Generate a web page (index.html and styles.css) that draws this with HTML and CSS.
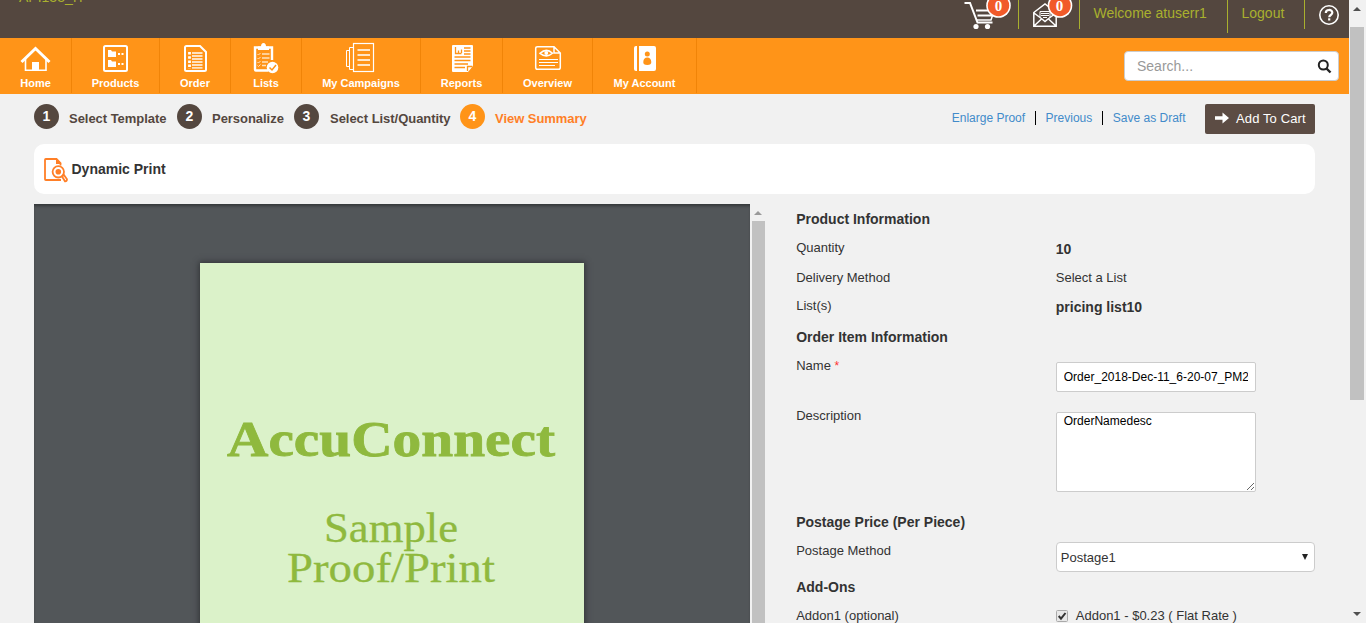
FILE: index.html
```html
<!DOCTYPE html>
<html lang="en">
<head>
<meta charset="utf-8">
<title>Dynamic Print - View Summary</title>
<link rel="stylesheet" href="styles.css">
</head>
<body>
<div class="app">
<div class="page">
  <header class="topbar">
    <div class="brand">API133_IT</div>
    <div class="top-actions">
      <a class="cart"><svg width="54" height="32" viewBox="964 0 54 32"><g fill="none" stroke="#fff" stroke-width="2"><path d="M964.500 3H970L977.500 22.500H992.500M976 10.500H990M977.500 15.500H993" /><path d="M993 14L991 20H977" stroke-width="1.500"/></g><circle cx="976" cy="26.500" r="2.600" fill="#fff"/><circle cx="987.500" cy="26.500" r="2.600" fill="#fff"/><circle cx="998.500" cy="5.500" r="12.300" fill="#fff"/><circle cx="998.500" cy="5.500" r="10.700" fill="#f15a29"/><text class="badge" x="998.500" y="10.500">0</text></svg></a>
      <a class="mail"><svg width="46" height="32" viewBox="1033 0 46 32"><g fill="none" stroke="#fff" stroke-width="1.500"><path d="M1033.800 12.500L1045 4L1056.200 12.500V26.300H1033.800ZM1034 13L1042 19L1045 21.500L1048 19L1056 13M1034 26L1042 18.500M1056 26L1048 18.500"/><path d="M1040 17V11.500H1050V17M1041 13.500H1049M1041 15.500H1049M1043 17.500H1047" stroke-width="1"/></g><circle cx="1060" cy="5.500" r="12.300" fill="#fff"/><circle cx="1060" cy="5.500" r="10.700" fill="#f15a29"/><text class="badge" x="1059.500" y="10.500">0</text></svg></a>
      <span class="welcome">Welcome atuserr1</span>
      <a class="logout">Logout</a>
      <a class="help"><svg width="22" height="22" viewBox="0 0 22 22"><circle cx="11" cy="11" r="9.200" fill="none" stroke="#fff" stroke-width="1.600"/><path d="M7.800 9C7.800 5 14.300 5 14.300 8.800C14.300 11 11.200 11 11.200 13.200" fill="none" stroke="#fff" stroke-width="2.200"/><path d="M10.100 14.300h2.200v2.200h-2.200z" fill="#fff"/></svg></a>
    </div>
  </header>

  <nav class="nav">
    <a class="nav-home"><svg width="31" height="32" viewBox="20 42 31 32"><path d="M21.500 62L35.500 48.500L49.500 62" fill="none" stroke="#fff" stroke-width="3"/><path d="M25.500 59V70.300H46V59" fill="none" stroke="#fff" stroke-width="1.600"/><path d="M32 62h7v9h-7z" fill="#fff"/></svg>Home</a>
    <a class="nav-products"><svg width="31" height="32" viewBox="100 42 31 32"><rect x="104" y="46" width="23" height="25" rx="1.500" fill="none" stroke="#fff" stroke-width="2"/><g fill="#fff"><path d="M108 50h3l1 1.500h4v5.500h-8zM108 60h3l1 1.500h4v5.500h-8zM118 53h2v2h-2zM121.500 53h2v2h-2zM118 63h2v2h-2zM121.500 63h2v2h-2z"/></g></svg>Products</a>
    <a class="nav-order"><svg width="32" height="32" viewBox="179 42 32 32"><path d="M186.500 46H200L206 52V69.500Q206 71 204.500 71H186.500Q185 71 185 69.500V47.500Q185 46 186.500 46Z" fill="none" stroke="#fff" stroke-width="2"/><path d="M192 53H202.500M192 56H202.500M192 59H202.500M192 62H202.500M192 65H202.500M192 67.800H202.500" stroke="#ffe2bf" stroke-width="1.800"/><path d="M189.500 52V69" stroke="#fff" stroke-width="2.800" stroke-dasharray="2.500 1.700"/></svg>Order</a>
    <a class="nav-lists"><svg width="32" height="32" viewBox="250 42 32 32"><path d="M268 70.500H256Q255 70.500 255 69.500V47.500H272V60" fill="none" stroke="#fff" stroke-width="2.400"/><path d="M258 50V46.500H261Q261 43 263.500 43Q266 43 266 46.500H269V50Z" fill="#fff"/><path d="M262 54H269.500M262 58H269.500M262 62H268M262 65.500H266" stroke="#ffe2bf" stroke-width="1.500"/><path d="M257.500 54l1 1 2-2M257.500 58l1 1 2-2M257.500 62l1 1 2-2M257.500 65.500l1 1 2-2" fill="none" stroke="#ffe2bf"/><circle cx="272.500" cy="67.500" r="5.800" fill="#fff"/><path d="M269.500 67.500l2.500 2.500 4-5" fill="none" stroke="#ff9418" stroke-width="1.500"/></svg>Lists</a>
    <a class="nav-campaigns"><svg width="32" height="32" viewBox="345 42 32 32"><g fill="none" stroke="#fff"><rect x="353.500" y="43.500" width="20" height="28" stroke-width="1.200"/><path d="M353.500 47.500H349.500V69.500H353.500M349.500 50.500H346.500V66.500H349.500"/><path d="M357.500 50H370M357.500 55H370M357.500 60H370M357.500 65H370" stroke-width="1.500"/></g></svg>My Campaigns</a>
    <a class="nav-reports"><svg width="31" height="32" viewBox="446 42 31 32"><path d="M453 45H472Q473 45 473 46V66L468 72H453Q452 72 452 71V46Q452 45 453 45Z" fill="#fff"/><path d="M455.500 47V53.500H461.500M458.500 53V50.500M461.500 53V49.500M464 48H470.500M464 51H470.500M464 54H470.500M454.500 57H470.500M454.500 60.500H470.500M454.500 64H468M454.500 67.500H465M467.500 71V66.500H472.500" fill="none" stroke="#ff9418" stroke-width="1.300"/></svg>Reports</a>
    <a class="nav-overview"><svg width="31" height="32" viewBox="532 42 31 32"><g fill="none" stroke="#fff" stroke-width="1.500"><path d="M554 46.800H537.500Q535.700 46.800 535.700 48.500V67.500Q535.700 69.300 537.500 69.300H558.500Q560.300 69.300 560.300 67.500V53ZM554 47V53H560"/><path d="M540 53.300Q546.500 47.500 552.500 53.300Q546.500 58.500 540 53.300Z"/><path d="M539 59.500H558M539 62.500H558M539 65.500H555" stroke-width="1.200"/></g><circle cx="546.300" cy="53" r="1.900" fill="#fff"/></svg>Overview</a>
    <a class="nav-account"><svg width="31" height="32" viewBox="629 42 31 32"><path d="M634 48Q634 46 636 46H637V71H636Q634 71 634 69ZM639 46H654Q656 46 656 48V69Q656 71 654 71H639Z" fill="#fff"/><circle cx="647.300" cy="54" r="2.500" fill="#ff9418"/><path d="M643.300 62Q643.500 57.500 647.300 57.500Q651 57.500 651.300 62Q651.500 65 647.300 65Q643 65 643.300 62Z" fill="#ff9418"/></svg>My Account</a>
    <div class="search"><span>Search...</span><svg width="15" height="15" viewBox="0 0 15 15"><circle cx="6.300" cy="6" r="4.500" fill="none" stroke="#222" stroke-width="2"/><path d="M9.500 9.500L13.500 13.500" stroke="#222" stroke-width="2.400"/></svg></div>
  </nav>

  <main class="main">
    <div class="steps">
      <span class="num">1</span><span class="step step-1">Select Template</span>
      <span class="num">2</span><span class="step step-2">Personalize</span>
      <span class="num">3</span><span class="step step-3">Select List/Quantity</span>
      <span class="num current">4</span><span class="step active">View Summary</span>
      <div class="links"><a>Enlarge Proof</a><i></i><a>Previous</a><i></i><a>Save as Draft</a></div>
      <button class="add"><svg width="14" height="12" viewBox="0 0 14 12"><path d="M0 4.200H7.500V0.500L14 6L7.500 11.500V7.800H0Z" fill="#fff"/></svg>Add To Cart</button>
    </div>

    <div class="title-card">
      <svg width="25" height="25" viewBox="0 0 25 25"><g fill="none" stroke="#ff7f27" stroke-width="1.800"><path d="M17 22H1.800Q1 22 1 21.200V1.800Q1 1 1.800 1H12.500L16.500 5V7.500"/><circle cx="14.300" cy="13.800" r="5.700"/><path d="M18 18.500L20 17L23 21.300Q23 23.500 21 23.300Z"/></g><path d="M12 0L17.500 6H12Z" fill="#ff7f27"/><circle cx="14.300" cy="13.800" r="2.800" fill="#ff7f27"/></svg>
      <span>Dynamic Print</span>
    </div>

    <div class="columns">
      <div class="viewer">
        <div class="proof">
          <svg width="384" height="400" viewBox="0 0 384 400"><g class="art">
            <text class="art-title" x="27" y="193" textLength="328" lengthAdjust="spacingAndGlyphs">AccuConnect</text>
            <text class="art-line" x="124" y="279" textLength="134" lengthAdjust="spacingAndGlyphs">Sample</text>
            <text class="art-line" x="87" y="319" textLength="208" lengthAdjust="spacingAndGlyphs">Proof/Print</text>
          </g></svg>
        </div>
      </div>
      <div class="viewer-scroll"><b class="arrow-up"></b><div class="thumb"></div></div>
      <section class="info">
        <h3>Product Information</h3>
        <div class="row quantity"><label>Quantity</label><strong>10</strong></div>
        <div class="row delivery"><label>Delivery Method</label><span class="value">Select a List</span></div>
        <div class="row lists"><label>List(s)</label><strong>pricing list10</strong></div>
        <h3>Order Item Information</h3>
        <div class="row name"><label>Name <em>*</em></label><input type="text" value="Order_2018-Dec-11_6-20-07_PM2"></div>
        <div class="row description"><label>Description</label><textarea>OrderNamedesc</textarea></div>
        <h3>Postage Price (Per Piece)</h3>
        <div class="row postage"><label>Postage Method</label><div class="select"><span>Postage1</span><b></b></div></div>
        <h3>Add-Ons</h3>
        <div class="row addon"><label>Addon1 (optional)</label><span class="check"><svg width="12" height="12" viewBox="0 0 12 12"><rect x=".5" y=".5" width="11" height="11" rx="1" fill="#e8e8e8" stroke="#aaa"/><path d="M2.700 6L5 8.700L9.500 3" fill="none" stroke="#333" stroke-width="2"/></svg>Addon1 - $0.23 ( Flat Rate )</span></div>
      </section>
    </div>
  </main>
</div>
<div class="page-scroll"><b class="arrow-up"></b><div class="thumb"></div><b class="arrow-down"></b></div>
</div>
</body>
</html>
```
FILE: styles.css
```css
* { box-sizing: border-box; }
body { margin: 0; font: 13px/20px "Liberation Sans", Arial, sans-serif; color: #333; background: #f1f1f1; overflow: hidden; }
svg { display: block; flex: none; }
.app { display: flex; width: 1366px; height: 623px; overflow: hidden; }
.page { width: 1349px; height: 623px; overflow: hidden; }

.topbar { height: 38px; background: #54473f; display: flex; justify-content: space-between; color: #a9b02e; font-size: 14px; }
.brand { margin: -13px 0 0 19px; font-size: 14px; height: 20px; white-space: nowrap; }
.top-actions { display: flex; align-items: flex-start; white-space: nowrap; }
.cart, .mail { height: 29px; border-right: 1px solid #a9b02e; }
.mail { margin-left: 14px; width: 47px; }
.badge { font: bold 15px "Liberation Serif", serif; fill: #fff; text-anchor: middle; }
.welcome { width: 148px; height: 33px; padding: 3px 0 0 13.5px; border-right: 1px solid #a9b02e; }
.logout { width: 77px; height: 29px; padding: 3px 0 0 13.5px; border-right: 1px solid #a9b02e; }
.help { margin: 4px 9px 0 13px; }

.nav { height: 56px; background: #ff9418; display: flex; color: #fff; font-size: 11px; font-weight: bold; line-height: 14px; }
.nav a { height: 55px; border-right: 1px solid #f08408; display: flex; flex-direction: column; align-items: center; padding-top: 4px; gap: 2px; white-space: nowrap; }
.nav-home { width: 72px; }
.nav-products { width: 88px; }
.nav-order, .nav-lists { width: 71px; }
.nav-campaigns { width: 119px; }
.nav-reports { width: 82px; }
.nav-overview { width: 90px; }
.nav-account { width: 104px; }
.search { margin: 13px 10px 0 auto; width: 215px; height: 30px; background: #fff; border: 1px solid #ccc; border-radius: 4px; padding: 0 6px 0 12px; display: flex; align-items: center; justify-content: space-between; color: #999; font-size: 14px; font-weight: normal; }

.main { padding: 10px 34px 0; }
.steps { display: flex; height: 40px; font-size: 13px; font-weight: bold; color: #54473f; white-space: nowrap; }
.num { width: 25px; height: 25px; border-radius: 50%; background: #54473f; color: #fff; text-align: center; line-height: 25px; font-size: 14px; }
.num.current { background: #ff9418; }
.step { padding-top: 5px; margin-left: 10px; letter-spacing: -0.04px; }
.step-1 { width: 108px; }
.step-2 { width: 82px; }
.step-3 { width: 130px; margin-left: 11px; }
.links { margin: 4px 19.5px 0 auto; display: flex; font-size: 12px; font-weight: normal; color: #428bca; }
.links i { width: 1px; height: 14px; margin: 3px 9.5px 0 10px; background: #000; }
.active { color: #ff7f27; }
.add { width: 110px; height: 30px; padding: 0 0 2px 10px; border: 0; border-radius: 2px; background: #5c4c44; color: #fff; font: 13px "Liberation Sans", Arial, sans-serif; letter-spacing: 0.12px; display: flex; align-items: center; gap: 7px; }
.title-card { height: 50px; width: 1281px; background: #fff; border-radius: 10px; display: flex; align-items: center; padding: 3px 10px 0; font-size: 14px; font-weight: bold; gap: 2.5px; }
.title-card span { margin-top: -3px; }

.columns { display: flex; margin-top: 10px; width: 1281px; }
.viewer { width: 716px; height: 419px; background: #525659; overflow: hidden; padding: 59px 0 0 166px; box-shadow: inset 0 3px 3px -1px #35383a; }
.proof { width: 384px; height: 400px; background: #dbf2c9; box-shadow: 0 0 6px 1px #303336; }
.art { fill: #8fb93e; stroke: #8fb93e; font-family: "Liberation Serif", serif; }
.art-title { font-size: 51px; font-weight: bold; stroke-width: 0.8px; }
.art-line { font-size: 43px; stroke-width: 0.3px; }
.viewer-scroll { width: 17px; padding: 0 2px; display: flex; flex-direction: column; }
.viewer-scroll .arrow-up { border-bottom-color: #9a9a9a; }
.thumb { background: #c1c1c1; }
.viewer-scroll .thumb { height: 402px; margin-top: 6px; }
.arrow-up, .arrow-down { width: 0; height: 0; border: 4px solid transparent; border-top-width: 0; border-bottom-color: #505050; align-self: center; }
.viewer-scroll .arrow-up { margin-top: 7px; }

.info { margin-left: 29.4px; padding-top: 5px; width: 519px; }
.info h3 { margin: 0; font-size: 14px; line-height: 20px; height: 28px; }
.row { display: grid; grid-template-columns: 259.6px 259px; align-items: start; }
.row label, .row .value, .row .check { margin-top: 1px; }
.row strong { font-size: 14px; margin-top: 2px; }
.row em { color: #f33; font-style: normal; font-size: 12px; }
.quantity { height: 30px; }
.delivery { height: 28px; }
.lists { height: 32px; }
.name { height: 50px; }
.description { height: 107px; }
.postage { height: 37px; }
.row input, .row textarea { width: 200px; height: 30px; margin: 7px 0 0; border: 1px solid #ccc; border-radius: 2px; background: #fff; color: #000; padding: 0 7px; font: 12px/16px "Liberation Sans", Arial, sans-serif; }
.row textarea { height: 80px; }
.select { margin-top: 2px; height: 30px; border: 1px solid #ccc; border-radius: 4px; background: #fff; display: flex; align-items: center; justify-content: space-between; padding: 0 6px 0 4px; }
.select span { padding-top: 1px; }
.select b { border: 3.5px solid transparent; border-top: 6px solid #222; border-bottom: 0; }
.check { display: flex; align-items: center; gap: 8px; white-space: nowrap; }

.page-scroll { width: 17px; padding: 0 2px 0 1px; display: flex; flex-direction: column; }
.page-scroll .arrow-up { margin-top: 7px; }
.page-scroll .thumb { height: 373px; margin-top: 16px; }
.arrow-down { border-top: 4px solid #505050; border-bottom: 0; margin-top: auto; margin-bottom: 7px; }
```
